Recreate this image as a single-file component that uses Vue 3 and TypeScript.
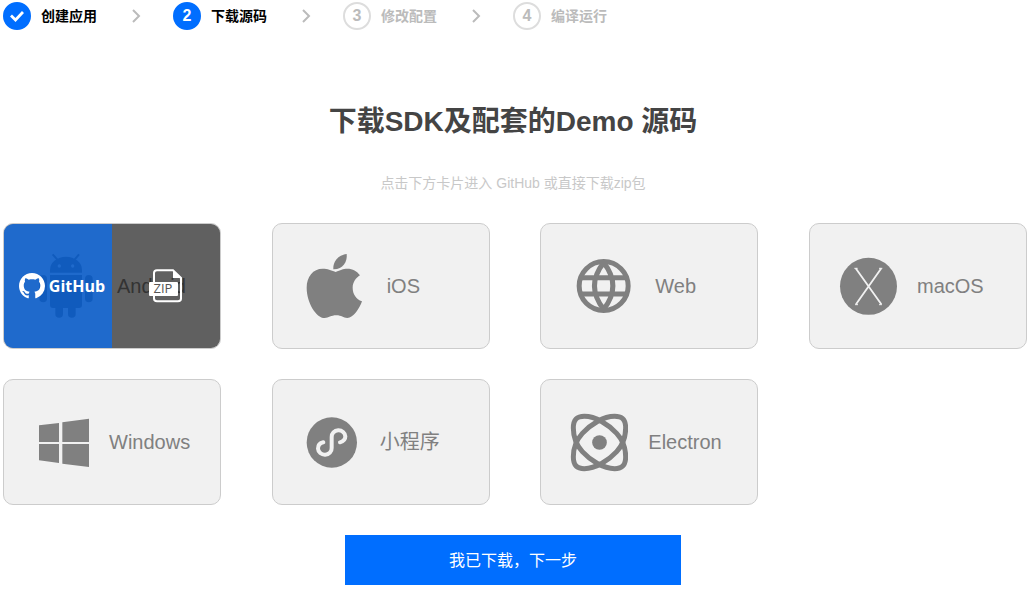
<script setup lang="ts">
import { ref } from 'vue'

type StepState = 'done' | 'current' | 'todo'

interface Step {
  label: string
  state: StepState
}

interface Platform {
  id: string
  name: string
  box: string
}

const steps: Step[] = [
  { label: '创建应用', state: 'done' },
  { label: '下载源码', state: 'current' },
  { label: '修改配置', state: 'todo' },
  { label: '编译运行', state: 'todo' },
]

const platforms: Platform[] = [
  { id: 'android', name: 'Android', box: '99 108 192 210' },
  { id: 'ios', name: 'iOS', box: '110 108 195 210' },
  { id: 'web', name: 'Web', box: '106 108 195 210' },
  { id: 'macos', name: 'macOS', box: '117 108 174 210' },
  { id: 'windows', name: 'Windows', box: '99 105 168 210' },
  { id: 'mini', name: '小程序', box: '110 105 174 210' },
  { id: 'electron', name: 'Electron', box: '108 105 174 210' },
]

const active = ref('android')
</script>

<template>
  <main class="page">
    <ol class="steps">
      <li v-for="(step, i) in steps" :key="step.label" class="step" :class="step.state">
        <span class="badge">
          <svg v-if="step.state === 'done'" width="14" height="12" viewBox="0 0 14 12" aria-hidden="true">
            <path d="M1 5.500 5.500 10 13 2" fill="none" stroke="#fff" stroke-width="2.800" />
          </svg>
          <template v-else>{{ i + 1 }}</template>
        </span>
        <span class="label">{{ step.label }}</span>
        <svg v-if="i < steps.length - 1" class="chevron" width="10" height="14" viewBox="0 0 10 14" aria-hidden="true">
          <path d="M2 1 8 7 2 13" fill="none" stroke="#bbb" stroke-width="2" />
        </svg>
      </li>
    </ol>

    <h1 class="title">下载SDK及配套的Demo 源码</h1>
    <p class="hint">点击下方卡片进入 GitHub 或直接下载zip包</p>

    <ul class="grid">
      <li v-for="p in platforms" :key="p.id" class="card" @mouseenter="active = p.id">
        <svg class="icon" :class="p.id" :viewBox="p.box" aria-hidden="true">
          <g v-if="p.id === 'android'" fill="#808080">
            <path d="M150 173v-8a48 40 0 0 1 96 0v8zM173 153a5 5 0 1 0 10 0a5 5 0 1 0-10 0zM213 153a5 5 0 1 0 10 0a5 5 0 1 0-10 0z" fill-rule="evenodd" />
            <path d="M158 118 174 136M237 118 222 136" stroke="#808080" stroke-width="6" />
            <path d="M150 180h96v90q0 9-9 9h-10v18a11.500 11.500 0 0 1-23 0v-18h-15v18a11.500 11.500 0 0 1-23 0v-18h-7q-9 0-9-9z" />
            <rect x="118" y="180" width="23" height="82" rx="11.500" />
            <rect x="255" y="180" width="23" height="82" rx="11.500" />
          </g>
          <g v-else-if="p.id === 'ios'" fill="#808080">
            <path d="M244 117C247 140 232 164 204 163C202 141 218 120 244 117Z" />
            <path d="M211 171C195 165 188 161 172 161C143 161 124 185 124 218C124 262 152 309 178 309C190 309 197 301 213 301C229 301 233 309 246 309C264 309 283 280 290 259C272 252 262 237 262 218C262 201 272 189 284 181C275 168 262 161 246 161C232 161 226 165 211 171Z" />
          </g>
          <g v-else-if="p.id === 'web'" fill="none" stroke="#808080" stroke-width="15">
            <circle cx="207" cy="213" r="73.500" />
            <path d="M207 143C170 190 170 236 207 283M207 143C244 190 244 236 207 283M138 188H276M138 237H276" />
          </g>
          <g v-else-if="p.id === 'macos'">
            <circle cx="205.500" cy="214" r="85.500" fill="#808080" />
            <path d="M167 160 244 268M244 160 168 268" stroke="#f1f1f1" stroke-width="5.500" />
            <path d="M163 160h10M237 160h10M165 269h9M237 269h9" stroke="#f1f1f1" stroke-width="3" />
          </g>
          <path v-else-if="p.id === 'windows'" fill="#808080" d="M117 160 177 153V210H117ZM187 151 267 140V210H187ZM117 216H177V273L117 265ZM187 216H267V285L187 275Z" />
          <g v-else-if="p.id === 'mini'">
            <circle cx="199.500" cy="211.500" r="75.500" fill="#808080" />
            <path d="M224 211C236 208 240 201 240 193A20.500 19 0 0 0 199 195V228A20.500 19 0 0 1 158 230C158 220 164 213 174 211" fill="none" stroke="#f1f1f1" stroke-width="12" stroke-linecap="round" />
          </g>
          <g v-else fill="none" stroke="#808080" stroke-width="15">
            <path d="M118 168C118 143 128 133 151 133C185 133 223 157 248 184C268 206 275 232 275 254C275 279 265 290 242 290C208 290 170 266 145 239C125 217 118 190 118 168Z" />
            <path d="M275 168C275 143 265 133 242 133C208 133 170 157 145 184C125 206 118 232 118 254C118 279 128 290 151 290C185 290 223 266 248 239C268 217 275 190 275 168Z" />
            <circle cx="196.500" cy="211.500" r="22" fill="#808080" stroke="none" />
          </g>
        </svg>
        <span class="name">{{ p.name }}</span>

        <div v-if="active === p.id" class="overlay">
          <a class="source github" href="#github">
            <svg width="26" height="26" viewBox="0 0 16 16" aria-hidden="true">
              <path fill="#fff" d="M8 0C3.580 0 0 3.580 0 8c0 3.540 2.290 6.530 5.470 7.590.4.070.550-.170.550-.380 0-.190-.010-.820-.010-1.490-2.010.370-2.530-.490-2.690-.940-.090-.230-.480-.940-.820-1.130-.280-.150-.680-.520-.010-.530.630-.010 1.080.580 1.230.820.720 1.210 1.870.870 2.330.660.070-.520.280-.870.510-1.070-1.780-.2-3.640-.890-3.640-3.950 0-.870.310-1.590.820-2.150-.080-.2-.360-1.020.080-2.120 0 0 .670-.210 2.200.820.640-.180 1.320-.270 2-.270s1.360.090 2 .270c1.530-1.040 2.200-.820 2.200-.820.440 1.100.160 1.920.080 2.120.510.560.820 1.270.820 2.150 0 3.070-1.870 3.750-3.650 3.950.290.250.540.730.540 1.480 0 1.070-.010 1.930-.010 2.200 0 .210.150.460.550.380A8.010 8.010 0 0 0 16 8c0-4.420-3.580-8-8-8z" />
            </svg>
            <span>GitHub</span>
          </a>
          <a class="source zip" href="#zip" aria-label="ZIP">
            <svg width="34" height="34" viewBox="0 0 34 34" aria-hidden="true">
              <path d="M5 13V4Q5 1.200 8 1.200H24L32 9V29.500Q32 32.300 29 32.300H8Q5 32.300 5 29.500V26" fill="none" stroke="#fff" stroke-width="2" />
              <path d="M24 1V9H32.500Z" fill="#fff" />
              <rect x="0" y="13" width="29" height="14" rx="1" fill="#fff" />
              <text x="14" y="24" text-anchor="middle" class="zip-text">ZIP</text>
            </svg>
          </a>
        </div>
      </li>
    </ul>

    <button class="next" type="button">我已下载，下一步</button>
  </main>
</template>

<style>
body {
  margin: 0;
  background: #fff;
}
</style>

<style scoped>
.page {
  display: flex;
  flex-direction: column;
  margin-right: 4px;
  padding: 2px 0 5px;
  font-family: "Liberation Sans", "Noto Sans CJK SC", sans-serif;
}

.steps {
  display: flex;
  margin: 0;
  padding: 0 0 0 3px;
  list-style: none;
}

.step {
  display: flex;
  align-items: center;
  width: 170px;
  height: 28px;
  font-size: 14px;
  font-weight: 700;
  color: #000;
}

.label {
  padding-bottom: 2px;
}

.badge {
  display: flex;
  align-items: center;
  justify-content: center;
  box-sizing: border-box;
  width: 28px;
  height: 28px;
  margin-right: 10px;
  border: 2px solid #006eff;
  border-radius: 50%;
  background: #006eff;
  color: #fff;
  font-size: 16px;
}

.todo {
  color: #bbb;
}

.todo .badge {
  border-color: #ddd;
  background: #fff;
  color: #bbb;
}

.chevron {
  margin-left: 34px;
}

.title {
  margin: 71px 0 0;
  font-size: 28px;
  line-height: 42px;
  text-align: center;
  color: #444;
}

.hint {
  margin: 30px 0;
  font-size: 14px;
  line-height: 20px;
  text-align: center;
  color: #c8c8c8;
}

.grid {
  display: grid;
  grid-template-columns: repeat(auto-fill, 218px);
  justify-content: space-between;
  row-gap: 30px;
  margin: 0 -1px 30px 3px;
  padding: 0;
  list-style: none;
}

.card {
  position: relative;
  display: flex;
  align-items: center;
  gap: 20px;
  box-sizing: border-box;
  height: 126px;
  padding-left: 29px;
  border: 1px solid #ccc;
  border-radius: 10px;
  background: #f1f1f1;
  overflow: hidden;
}

.icon {
  flex: none;
  width: 58px;
  height: 70px;
}

.icon.android {
  width: 64px;
}

.icon.ios,
.icon.web {
  width: 65px;
}

.icon.windows {
  width: 56px;
}

.name {
  font-size: 20px;
  line-height: 30px;
  color: #808080;
}

.overlay {
  position: absolute;
  inset: 0;
  display: grid;
  grid-template-columns: 1fr 1fr;
  background: rgba(0, 0, 0, 0.6);
}

.source {
  display: flex;
  align-items: center;
  justify-content: center;
  min-width: 0;
  text-decoration: none;
}

.github {
  gap: 4px;
  padding-left: 8px;
  background: rgba(0, 110, 255, 0.68);
  color: #fff;
  font-family: "Open Sans", "Noto Sans", sans-serif;
  font-size: 16px;
  font-weight: 700;
}

.zip-text {
  font-family: "Open Sans", "Noto Sans", sans-serif;
  font-size: 13px;
  fill: #555;
}

.next {
  align-self: center;
  width: 336px;
  height: 50px;
  padding: 0 0 2px;
  border: 0;
  background: #006eff;
  color: #fff;
  font-family: inherit;
  font-size: 16px;
  cursor: pointer;
}
</style>
